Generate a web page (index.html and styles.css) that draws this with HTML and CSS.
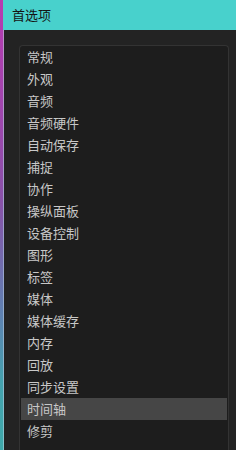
FILE: index.html
```html
<!DOCTYPE html>
<html lang="zh">
<head>
<meta charset="utf-8">
<link rel="stylesheet" href="styles.css">
</head>
<body>
<div class="app">
  <div class="strip"></div>
  <div class="main">
    <div class="header">首选项</div>
    <div class="content">
      <ul class="list">
        <li class="item">常规</li>
        <li class="item">外观</li>
        <li class="item">音频</li>
        <li class="item">音频硬件</li>
        <li class="item">自动保存</li>
        <li class="item">捕捉</li>
        <li class="item">协作</li>
        <li class="item">操纵面板</li>
        <li class="item">设备控制</li>
        <li class="item">图形</li>
        <li class="item">标签</li>
        <li class="item">媒体</li>
        <li class="item">媒体缓存</li>
        <li class="item">内存</li>
        <li class="item">回放</li>
        <li class="item">同步设置</li>
        <li class="item selected">时间轴</li>
        <li class="item">修剪</li>
      </ul>
    </div>
  </div>
</div>
</body>
</html>
```
FILE: styles.css
```css
html, body {
  margin: 0;
  padding: 0;
  height: 100%;
  overflow: hidden;
  background: #232323;
}
.app {
  display: flex;
  height: 450px;
  font-family: "Noto Sans CJK SC", "Noto Sans", sans-serif;
}
.strip {
  width: 3px;
  flex: none;
  background: linear-gradient(to bottom, #b83ab0 0%, #9a48ac 30%, #8852a8 45%, #5e82b2 70%, #44a2ae 85%, #3fa9aa 100%);
}
.main {
  flex: 1;
  display: flex;
  flex-direction: column;
  min-width: 0;
}
.header {
  height: 30px;
  flex: none;
  background: #48d1cc;
  color: #141414;
  font-size: 13px;
  line-height: 30px;
  padding-left: 9px;
  box-sizing: border-box;
}
.content {
  flex: 1;
  padding: 15px 7px 0 15px;
  background: #232323;
  border-left: 1px solid;
  border-image: linear-gradient(to bottom, #b890c8 0%, #9aa0cc 50%, #80c8cc 100%) 1;
}
.list {
  list-style: none;
  margin: 0;
  padding: 0 1px;
  border: 1px solid #333333;
  border-bottom: none;
  border-radius: 4px 4px 0 0;
  background: #1d1d1d;
  height: 420px;
}
.item {
  height: 22px;
  line-height: 22px;
  padding-left: 6px;
  color: #c8c8c8;
  font-size: 13px;
}
.item.selected {
  background: #464646;
}
```
